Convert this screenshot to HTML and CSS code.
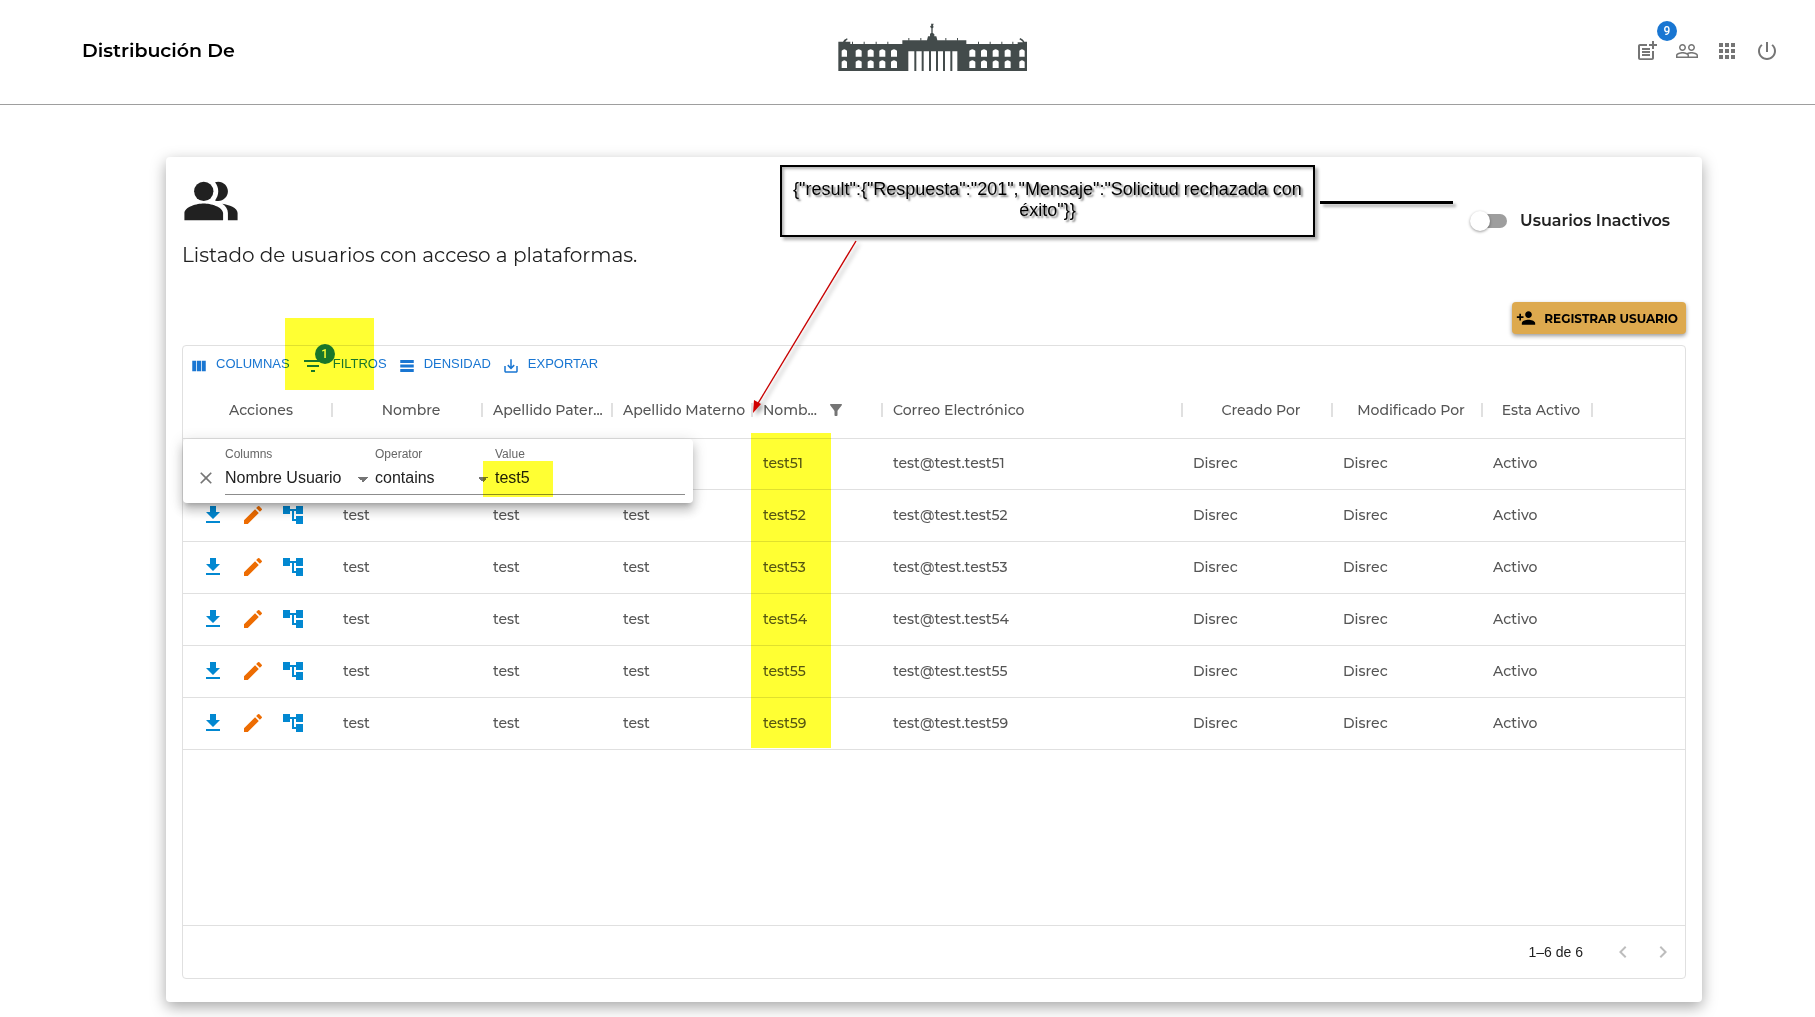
FILE: index.html
```html
<!DOCTYPE html>
<html lang="es">
<head>
<meta charset="utf-8">
<meta name="viewport" content="width=device-width, initial-scale=1">
<title>Distribución De</title>
<link rel="stylesheet" href="styles.css">
</head>
<body>
<svg class="sprite" aria-hidden="true">
  <symbol id="i-download" viewBox="0 0 24 24"><path d="M5 20h14v-2H5v2zM19 9h-4V3H9v6H5l7 7 7-7z"/></symbol>
  <symbol id="i-edit" viewBox="0 0 24 24"><path d="M3 17.25V21h3.75L17.81 9.94l-3.75-3.75L3 17.25zM20.71 7.04c.39-.39.39-1.02 0-1.41l-2.34-2.34a.996.996 0 0 0-1.41 0l-1.83 1.83 3.75 3.75 1.83-1.83z"/></symbol>
  <symbol id="i-tree" viewBox="0 0 24 24"><path d="M22 11V3h-7v3H9V3H2v8h7V8h2v10h4v3h7v-8h-7v3h-2V8h2v3z"/></symbol>
</svg>

<header class="topbar">
  <h1 class="brand">Distribución De</h1>
  <svg class="palace" viewBox="44 36 576 150" role="img" aria-label="Palacio">
    <g fill="#434b4b">
      <path d="M54 180V92h14l4-6 8-4 2 3-5 4-2 3h15v7h156V88h74l3-12h6v-8l4-2V52l-4-5 4-4-1-5h8l-2 6 2 4-3 4v14l5 3v7h6l3 12h87v11h154v-5h16l-3-4-8-5 3-4 8 5 4 6h14v88z"/>
      <path d="M95 92h3v8h-3zM130 92h3v8h-3zM166 92h3v8h-3zM201 92h3v8h-3zM264 81h3v8h-3zM300 81h3v8h-3zM375 81h3v8h-3zM410 81h3v8h-3zM473 92h3v8h-3zM508 92h3v8h-3zM543 92h3v8h-3zM576 92h3v8h-3z"/>
    </g>
    <g fill="#fff">
      <path d="M264 121h18v60h-18zM288 121h16v60h-16zM310 121h16v60h-16zM332 121h15v60h-15zM353 121h15v60h-15zM374 121h16v60h-16zM396 121h15v60h-15z"/>
      <path id="w" d="M64 137v-18q8-9 16 0v18zM64 171v-19q8-9 16 0v19zM106 137v-18q9-9 18 0v18zM106 171v-19q9-9 18 0v19zM142 137v-18q9-9 18 0v18zM142 171v-19q9-9 18 0v19zM177 137v-18q9-9 18 0v18zM177 171v-19q9-9 18 0v19zM212 137v-18q9-9 18 0v18zM212 171v-19q9-9 18 0v19z"/>
      <use href="#w" transform="matrix(-1 0 0 1 677 0)"/>
    </g>
  </svg>
  <nav class="topnav" aria-label="Principal">
    <button class="icon-btn" type="button" aria-label="Solicitudes">
      <svg viewBox="0 0 24 24"><path d="M17 19.22H5V7h7V5H5c-1.1 0-2 .9-2 2v12c0 1.1.9 2 2 2h12c1.1 0 2-.9 2-2v-7h-2v7.22zM19 2h-2v3h-3v2h3v3h2V7h3V5h-3V2zM7 9h8v2H7zM7 12v2h8v-2H7zM7 15h8v2H7z"/></svg>
      <span class="badge badge-nav">9</span>
    </button>
    <button class="icon-btn" type="button" aria-label="Usuarios">
      <svg viewBox="0 0 24 24"><path d="M16.5 13c-1.2 0-3.07.34-4.5 1-1.43-.67-3.3-1-4.5-1C5.33 13 1 14.08 1 16.25V19h22v-2.75c0-2.17-4.33-3.25-6.5-3.25zm-4 4.5h-10v-1.25c0-.54 2.56-1.75 5-1.75s5 1.21 5 1.75v1.25zm9 0H14v-1.25c0-.46-.2-.86-.52-1.22.88-.3 1.96-.53 3.02-.53 2.44 0 5 1.21 5 1.75v1.25zM7.5 12c1.93 0 3.5-1.57 3.5-3.5S9.43 5 7.5 5 4 6.57 4 8.5 5.57 12 7.5 12zm0-5.5c1.1 0 2 .9 2 2s-.9 2-2 2-2-.9-2-2 .9-2 2-2zm9 5.5c1.93 0 3.5-1.57 3.5-3.5S18.43 5 16.5 5 13 6.57 13 8.5s1.57 3.5 3.5 3.5zm0-5.5c1.1 0 2 .9 2 2s-.9 2-2 2-2-.9-2-2 .9-2 2-2z"/></svg>
    </button>
    <button class="icon-btn" type="button" aria-label="Aplicaciones">
      <svg viewBox="0 0 24 24"><path d="M4 8h4V4H4v4zm6 12h4v-4h-4v4zm-6 0h4v-4H4v4zm0-6h4v-4H4v4zm6 0h4v-4h-4v4zm6-10v4h4V4h-4zm-6 4h4V4h-4v4zm6 6h4v-4h-4v4zm0 6h4v-4h-4v4z"/></svg>
    </button>
    <button class="icon-btn" type="button" aria-label="Salir">
      <svg viewBox="0 0 24 24"><path d="M13 3h-2v10h2V3zm4.83 2.17l-1.42 1.42C17.99 7.86 19 9.81 19 12c0 3.87-3.13 7-7 7s-7-3.13-7-7c0-2.19 1.01-4.14 2.58-5.42L6.17 5.17C4.23 6.82 3 9.26 3 12c0 4.97 4.03 9 9 9s9-4.03 9-9c0-2.74-1.23-5.18-3.17-6.83z"/></svg>
    </button>
  </nav>
</header>

<main class="card">
  <div class="card-head">
    <div class="card-title">
      <svg class="people" viewBox="0 0 24 24" aria-hidden="true"><path d="M16.67 13.13C18.04 14.06 19 15.32 19 17v3h4v-3c0-2.18-3.57-3.47-6.33-3.87z"/><circle cx="9" cy="8" r="4"/><path d="M15 12c2.21 0 4-1.79 4-4s-1.79-4-4-4c-.47 0-.91.1-1.33.24C14.5 5.27 15 6.58 15 8s-.5 2.73-1.33 3.76c.42.14.86.24 1.33.24zM9 13c-2.67 0-8 1.34-8 4v3h16v-3c0-2.66-5.33-4-8-4z"/></svg>
      <h2 class="subtitle">Listado de usuarios con acceso a plataformas.</h2>
    </div>
    <label class="switch"><input class="switch-input" type="checkbox" role="switch"><span>Usuarios Inactivos</span></label>
  </div>

  <div class="card-actions">
    <button class="register" type="button">
      <svg viewBox="0 0 24 24" aria-hidden="true"><path d="M15 12c2.21 0 4-1.79 4-4s-1.79-4-4-4-4 1.79-4 4 1.79 4 4 4zm-9-2V7H4v3H1v2h3v3h2v-3h3v-2H6zm9 4c-2.67 0-8 1.34-8 4v2h16v-2c0-2.66-5.33-4-8-4z"/></svg>
      <span>REGISTRAR USUARIO</span>
    </button>
  </div>

  <section class="grid">
    <div class="toolbar">
      <button class="tool" type="button"><svg viewBox="0 0 24 24"><path d="M14.67 5v14H9.33V5h5.34zm1 14H21V5h-5.33v14zm-7.34 0V5H3v14h5.33z"/></svg><span>COLUMNAS</span></button>
      <button class="tool tool-filter" type="button"><svg viewBox="0 0 24 24"><path d="M10 18h4v-2h-4v2zM3 6v2h18V6H3zm3 7h12v-2H6v2z"/></svg><span class="badge badge-filter">1</span><span>FILTROS</span></button>
      <button class="tool" type="button"><svg viewBox="0 0 24 24"><path d="M21 8H3V4h18v4zm0 2H3v4h18v-4zm0 6H3v4h18v-4z"/></svg><span>DENSIDAD</span></button>
      <button class="tool" type="button"><svg viewBox="0 0 24 24"><path d="M19 12v7H5v-7H3v7c0 1.1.9 2 2 2h14c1.1 0 2-.9 2-2v-7h-2zm-6 .67l2.59-2.58L17 11.5l-5 5-5-5 1.41-1.41L11 12.67V3h2z"/></svg><span>EXPORTAR</span></button>
    </div>

    <div class="grid-body">
      <table class="grid-table">
        <colgroup><col class="w150"><col class="w150"><col class="w130"><col class="w140"><col class="w130"><col class="w300"><col class="w150"><col class="w150"><col class="w110"><col></colgroup>
        <thead>
          <tr>
            <th class="mid">Acciones</th><th class="mid">Nombre</th><th title="Apellido Paterno">Apellido Pater...</th><th>Apellido Materno</th>
            <th title="Nombre Usuario"><span class="filtered">Nomb...<svg viewBox="0 0 24 24"><path d="M4.25 5.61C6.27 8.2 10 13 10 13v6c0 .55.45 1 1 1h2c.55 0 1-.45 1-1v-6s3.72-4.8 5.74-7.39c.51-.66.04-1.61-.79-1.61H5.04c-.83 0-1.3.95-.79 1.61z"/></svg></span></th>
            <th>Correo Electrónico</th><th class="mid">Creado Por</th><th class="mid">Modificado Por</th><th class="mid">Esta Activo</th><td></td>
          </tr>
        </thead>
        <tbody>
          <tr><td><div class="row-actions"><button class="act" type="button" aria-label="Descargar"><svg><use href="#i-download"/></svg></button><button class="act act-edit" type="button" aria-label="Editar"><svg><use href="#i-edit"/></svg></button><button class="act" type="button" aria-label="Accesos"><svg><use href="#i-tree"/></svg></button></div></td><td>test</td><td>test</td><td>test</td><td>test51</td><td>test@test.test51</td><td>Disrec</td><td>Disrec</td><td>Activo</td><td></td></tr>
          <tr><td><div class="row-actions"><button class="act" type="button" aria-label="Descargar"><svg><use href="#i-download"/></svg></button><button class="act act-edit" type="button" aria-label="Editar"><svg><use href="#i-edit"/></svg></button><button class="act" type="button" aria-label="Accesos"><svg><use href="#i-tree"/></svg></button></div></td><td>test</td><td>test</td><td>test</td><td>test52</td><td>test@test.test52</td><td>Disrec</td><td>Disrec</td><td>Activo</td><td></td></tr>
          <tr><td><div class="row-actions"><button class="act" type="button" aria-label="Descargar"><svg><use href="#i-download"/></svg></button><button class="act act-edit" type="button" aria-label="Editar"><svg><use href="#i-edit"/></svg></button><button class="act" type="button" aria-label="Accesos"><svg><use href="#i-tree"/></svg></button></div></td><td>test</td><td>test</td><td>test</td><td>test53</td><td>test@test.test53</td><td>Disrec</td><td>Disrec</td><td>Activo</td><td></td></tr>
          <tr><td><div class="row-actions"><button class="act" type="button" aria-label="Descargar"><svg><use href="#i-download"/></svg></button><button class="act act-edit" type="button" aria-label="Editar"><svg><use href="#i-edit"/></svg></button><button class="act" type="button" aria-label="Accesos"><svg><use href="#i-tree"/></svg></button></div></td><td>test</td><td>test</td><td>test</td><td>test54</td><td>test@test.test54</td><td>Disrec</td><td>Disrec</td><td>Activo</td><td></td></tr>
          <tr><td><div class="row-actions"><button class="act" type="button" aria-label="Descargar"><svg><use href="#i-download"/></svg></button><button class="act act-edit" type="button" aria-label="Editar"><svg><use href="#i-edit"/></svg></button><button class="act" type="button" aria-label="Accesos"><svg><use href="#i-tree"/></svg></button></div></td><td>test</td><td>test</td><td>test</td><td>test55</td><td>test@test.test55</td><td>Disrec</td><td>Disrec</td><td>Activo</td><td></td></tr>
          <tr><td><div class="row-actions"><button class="act" type="button" aria-label="Descargar"><svg><use href="#i-download"/></svg></button><button class="act act-edit" type="button" aria-label="Editar"><svg><use href="#i-edit"/></svg></button><button class="act" type="button" aria-label="Accesos"><svg><use href="#i-tree"/></svg></button></div></td><td>test</td><td>test</td><td>test</td><td>test59</td><td>test@test.test59</td><td>Disrec</td><td>Disrec</td><td>Activo</td><td></td></tr>
        </tbody>
      </table>

      <form class="filter-panel">
        <button class="filter-close" type="button" aria-label="Quitar filtro"><svg viewBox="0 0 24 24"><path d="M19 6.41L17.59 5 12 10.59 6.41 5 5 6.41 10.59 12 5 17.59 6.41 19 12 13.41 17.59 19 19 17.59 13.41 12z"/></svg></button>
        <div class="field field-col"><label for="f-col">Columns</label><select id="f-col"><option>Nombre Usuario</option></select></div>
        <div class="field field-op"><label for="f-op">Operator</label><select id="f-op"><option>contains</option></select></div>
        <div class="field field-val"><label for="f-val">Value</label><input id="f-val" type="text" value="test5"></div>
      </form>
    </div>

    <footer class="pager">
      <span>1–6 de 6</span>
      <button class="page-btn" type="button" disabled aria-label="Página anterior"><svg viewBox="0 0 24 24"><path d="M15.41 16.59L10.83 12l4.58-4.59L14 6l-6 6 6 6z"/></svg></button>
      <button class="page-btn" type="button" disabled aria-label="Página siguiente"><svg viewBox="0 0 24 24"><path d="M8.59 16.59L13.17 12 8.59 7.41 10 6l6 6-6 6z"/></svg></button>
    </footer>
  </section>

  <div class="mark mark-filter"></div>
  <div class="mark mark-names"></div>
  <div class="mark mark-value"></div>
  <p class="callout">{"result":{"Respuesta":"201","Mensaje":"Solicitud rechazada con éxito"}}</p>
  <div class="rule"></div>
  <svg class="arrow" viewBox="0 0 120 184" aria-hidden="true"><path d="M107 4L8 168" fill="none" stroke="#c80000" stroke-width="1.4"/><path d="M4 176l1-13 7 4z" fill="#d00000"/></svg>
</main>
</body>
</html>
```

FILE: styles.css
```css
* { box-sizing: border-box; }

body {
  margin: 0;
  background: #fff;
  color: #212121;
  font-family: Montserrat, Inter, "Open Sans", sans-serif;
  font-size: 14px;
}

button {
  padding: 0;
  border: 0;
  background: none;
  color: inherit;
  font: inherit;
  cursor: pointer;
}

svg { display: block; fill: currentColor; flex: none; }
.sprite { display: none; }

/* Top bar */
.topbar {
  display: grid;
  grid-template-columns: 1fr auto 1fr;
  align-items: center;
  height: 105px;
  padding: 0 36px 2px 82px;
  border-bottom: 1px solid #9e9e9e;
}
.brand { margin: 0; color: #000; font-size: 19px; font-weight: 600; line-height: 24px; }
.palace { width: 192px; height: 50px; margin-bottom: 6px; }
.topnav { display: flex; justify-content: flex-end; gap: 16px; color: #757575; }
.icon-btn { position: relative; width: 24px; height: 24px; }
.icon-btn svg { width: 24px; height: 24px; }

.badge {
  position: absolute;
  width: 20px;
  height: 20px;
  border-radius: 10px;
  background: #1976d2;
  color: #fff;
  font: 500 12px/20px Roboto, sans-serif;
  text-align: center;
}
.badge-nav { top: -18px; left: 22px; }
.badge-filter { top: -6px; left: 17px; }

/* Card */
.card {
  position: relative;
  margin: 52px 113px 15px 166px;
  padding: 15px 16px 23px;
  border-radius: 4px;
  box-shadow: 0 5px 15px rgba(0, 0, 0, .35);
}
.card-head { display: flex; justify-content: space-between; align-items: center; }
.people { width: 58px; height: 58px; }
.subtitle { margin: 13px 0 0; font-size: 20px; font-weight: 400; line-height: 24px; }

.switch {
  display: flex;
  align-items: center;
  gap: 13px;
  margin: 2px 16px 0 0;
  font-size: 16px;
  font-weight: 600;
  line-height: 24px;
}
.switch-input {
  appearance: none;
  position: relative;
  width: 34px;
  height: 14px;
  margin: 0;
  border-radius: 7px;
  background: #9e9e9e;
}
.switch-input::before {
  content: "";
  position: absolute;
  top: -3px;
  left: -3px;
  width: 20px;
  height: 20px;
  border-radius: 50%;
  background: #fff;
  box-shadow: 0 1px 3px rgba(0, 0, 0, .4);
}

.card-actions { display: flex; justify-content: flex-end; margin: 35px 0 11px; }
.register {
  display: flex;
  align-items: center;
  gap: 8px;
  height: 32px;
  padding: 0 8px 0 4px;
  border-radius: 4px;
  background: #dda94e;
  box-shadow: 0 2px 4px rgba(0, 0, 0, .4);
  color: #000;
  font-size: 12px;
  font-weight: 700;
}
.register svg { width: 20px; height: 20px; }

/* Data grid */
.grid {
  display: flex;
  flex-direction: column;
  min-height: 634px;
  border: 1px solid #e0e0e0;
  border-radius: 4px;
}
.toolbar {
  display: flex;
  align-items: center;
  height: 36px;
  padding: 0 4px;
  color: #1976d2;
  font: 13px/20px "Liberation Sans", Arial, sans-serif;
}
.tool { position: relative; display: flex; align-items: center; gap: 8px; padding: 0 8px 0 3px; }
.tool svg { width: 18px; height: 18px; margin-top: 4px; }
.tool-filter svg { width: 24px; height: 24px; }

.grid-body { position: relative; flex: 1; }
.grid-table { width: 100%; table-layout: fixed; border-spacing: 0; color: #555; }
.w110 { width: 110px; }
.w130 { width: 130px; }
.w140 { width: 140px; }
.w150 { width: 150px; }
.w300 { width: 300px; }
.grid-table th,
.grid-table td {
  height: 52px;
  padding: 0 0 2px 10px;
  border-bottom: 1px solid #e0e0e0;
  font-weight: 500;
  text-align: left;
  white-space: nowrap;
}
.grid-table thead th,
.grid-table thead td { height: 57px; }
.grid-table thead th {
  padding-bottom: 0;
  background: linear-gradient(#e0e0e0, #e0e0e0) no-repeat right 21px / 2px 14px;
}
.grid-table thead th.mid { padding-left: 6px; text-align: center; }
.grid-table tbody tr:first-child td { height: 51px; }
.filtered { display: flex; align-items: center; gap: 10px; }
.filtered svg { width: 18px; height: 18px; color: #757575; }

.row-actions { display: flex; gap: 16px; padding-left: 8px; }
.act { width: 24px; height: 24px; color: #0288d1; }
.act svg { width: 24px; height: 24px; }
.act-edit { color: #ed6c02; }

.filter-panel {
  position: absolute;
  top: 57px;
  left: 0;
  display: flex;
  width: 510px;
  height: 64px;
  padding: 8px;
  border-radius: 4px;
  background: #fff;
  box-shadow: 0 5px 5px -3px rgba(0, 0, 0, .2), 0 8px 10px 1px rgba(0, 0, 0, .14), 0 3px 14px 2px rgba(0, 0, 0, .12);
  font-family: "Liberation Sans", Arial, sans-serif;
}
.filter-close { width: 30px; padding: 14px 5px 0; color: #757575; }
.filter-close svg { width: 20px; height: 20px; }
.field { display: flex; flex-direction: column; border-bottom: 1px solid #8c8c8c; }
.field-col { width: 150px; margin-left: 4px; }
.field-op { width: 120px; }
.field-val { flex: 1; }
.field label { color: #666; font-size: 12px; line-height: 15px; }
.field select,
.field input {
  appearance: none;
  width: 100%;
  height: 32px;
  margin: 0;
  padding: 0;
  border: 0;
  background: none;
  color: #212121;
  font: 16px/32px "Liberation Sans", Arial, sans-serif;
  outline: 0;
}
.field select {
  background: linear-gradient(to bottom right, #757575 50%, transparent 50%) no-repeat right 7px top 15px / 5px 5px,
    linear-gradient(to bottom left, #757575 50%, transparent 50%) no-repeat right 12px top 15px / 5px 5px;
}

.pager {
  display: flex;
  align-items: center;
  justify-content: flex-end;
  gap: 16px;
  height: 53px;
  padding: 0 10px;
  border-top: 1px solid #e0e0e0;
  font: 14px/20px "Liberation Sans", Arial, sans-serif;
}
.pager span { margin-right: 12px; }
.page-btn { color: #bdbdbd; }
.page-btn svg { width: 24px; height: 24px; }

/* Review notes laid over the card */
.mark { position: absolute; background: #ffff33; mix-blend-mode: multiply; pointer-events: none; }
.mark-filter { top: 161px; left: 119px; width: 89px; height: 72px; }
.mark-names { top: 276px; left: 585px; width: 80px; height: 315px; }
.mark-value { top: 304px; left: 317px; width: 70px; height: 36px; }

.callout {
  position: absolute;
  top: 8px;
  left: 614px;
  width: 535px;
  height: 72px;
  margin: 0;
  padding: 12px 10px;
  border: 2px solid #000;
  background: #fff;
  box-shadow: 3px 3px 3px rgba(0, 0, 0, .3), inset 2px 2px 3px rgba(0, 0, 0, .3);
  color: #000;
  font: 18px/21px "Liberation Sans", Arial, sans-serif;
  text-align: center;
  text-shadow: 2px 2px 2px rgba(0, 0, 0, .5);
}
.rule {
  position: absolute;
  top: 44px;
  left: 1154px;
  width: 133px;
  height: 3px;
  background: #000;
  box-shadow: 3px 3px 3px rgba(0, 0, 0, .3);
}
.arrow {
  position: absolute;
  top: 80px;
  left: 583px;
  width: 120px;
  height: 184px;
  filter: drop-shadow(3px 3px 2px rgba(0, 0, 0, .35));
}
```
